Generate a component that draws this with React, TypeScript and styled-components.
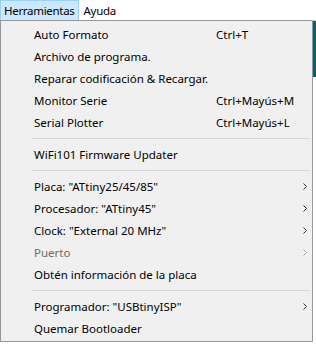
import styled, { createGlobalStyle } from "styled-components";

const GlobalStyle = createGlobalStyle`
  html, body {
    margin: 0;
    padding: 0;
    background: #ffffff;
  }
  body {
    font-family: "Segoe UI", "Noto Sans", "Open Sans", sans-serif;
    font-size: 11.5px;
    color: #000000;
  }
`;

const Screen = styled.div`
  width: 316px;
  height: 345px;
  display: flex;
  flex-direction: column;
  overflow: hidden;
`;

const MenuBar = styled.div`
  height: 20px;
  display: flex;
  align-items: stretch;
  background: #ffffff;
`;

const BarItem = styled.div<{ $open?: boolean }>`
  display: flex;
  align-items: center;
  padding: 0 ${(p) => (p.$open ? "3px" : "4px")};
  box-sizing: border-box;
  letter-spacing: -0.3px;
  background: ${(p) => (p.$open ? "#cce8ff" : "transparent")};
  border: 1px solid ${(p) => (p.$open ? "#99d1ff" : "transparent")};
  border-bottom: none;
`;

const Body = styled.div`
  flex: 1;
  display: flex;
  align-items: flex-start;
`;

const Panel = styled.div`
  width: 313px;
  box-sizing: border-box;
  background: #f0f0f0;
  border: 1px solid #979797;
  padding: 2px;
  display: flex;
  flex-direction: column;
`;

const Backdrop = styled.div`
  flex: 1;
  height: 56px;
  background: #006468;
  border-top: 1px solid #dadada;
`;

const Item = styled.div<{ $disabled?: boolean }>`
  height: 22px;
  display: flex;
  align-items: center;
  padding-left: 31px;
  color: ${(p) => (p.$disabled ? "#6d6d6d" : "#000000")};
  white-space: nowrap;
`;

const Label = styled.span<{ $fixed?: boolean }>`
  width: ${(p) => (p.$fixed ? "182px" : "auto")};
`;

const Shortcut = styled.span`
  flex: 1;
`;

const Arrow = styled.span<{ $disabled?: boolean }>`
  margin-left: auto;
  margin-right: 3px;
  display: flex;
  align-items: center;
  color: ${(p) => (p.$disabled ? "#a8a8a8" : "#333333")};
`;

const Separator = styled.div`
  height: 10px;
  display: flex;
  align-items: center;
  padding-left: 29px;

  &::after {
    content: "";
    flex: 1;
    height: 1px;
    background: #d7d7d7;
  }
`;

type Entry =
  | { sep: true }
  | { sep?: false; label: string; shortcut?: string; sub?: boolean; disabled?: boolean };

const entries: Entry[] = [
  { label: "Auto Formato", shortcut: "Ctrl+T" },
  { label: "Archivo de programa." },
  { label: "Reparar codificación & Recargar." },
  { label: "Monitor Serie", shortcut: "Ctrl+Mayús+M" },
  { label: "Serial Plotter", shortcut: "Ctrl+Mayús+L" },
  { sep: true },
  { label: "WiFi101 Firmware Updater" },
  { sep: true },
  { label: 'Placa: "ATtiny25/45/85"', sub: true },
  { label: 'Procesador: "ATtiny45"', sub: true },
  { label: 'Clock: "External 20 MHz"', sub: true },
  { label: "Puerto", sub: true, disabled: true },
  { label: "Obtén información de la placa" },
  { sep: true },
  { label: 'Programador: "USBtinyISP"', sub: true },
  { label: "Quemar Bootloader" },
];

function Chevron() {
  return (
    <svg width="4" height="7" viewBox="0 0 4 7">
      <path d="M0.5 0.5 L3.5 3.5 L0.5 6.5" fill="none" stroke="currentColor" strokeWidth="1" />
    </svg>
  );
}

export default function App() {
  return (
    <Screen>
      <GlobalStyle />
      <MenuBar>
        <BarItem $open>Herramientas</BarItem>
        <BarItem>Ayuda</BarItem>
      </MenuBar>
      <Body>
        <Panel>
          {entries.map((e, i) =>
            e.sep ? (
              <Separator key={i} />
            ) : (
              <Item key={i} $disabled={e.disabled}>
                <Label $fixed={!!e.shortcut}>{e.label}</Label>
                {e.shortcut && <Shortcut>{e.shortcut}</Shortcut>}
                {e.sub && (
                  <Arrow $disabled={e.disabled}>
                    <Chevron />
                  </Arrow>
                )}
              </Item>
            )
          )}
        </Panel>
        <Backdrop />
      </Body>
    </Screen>
  );
}
